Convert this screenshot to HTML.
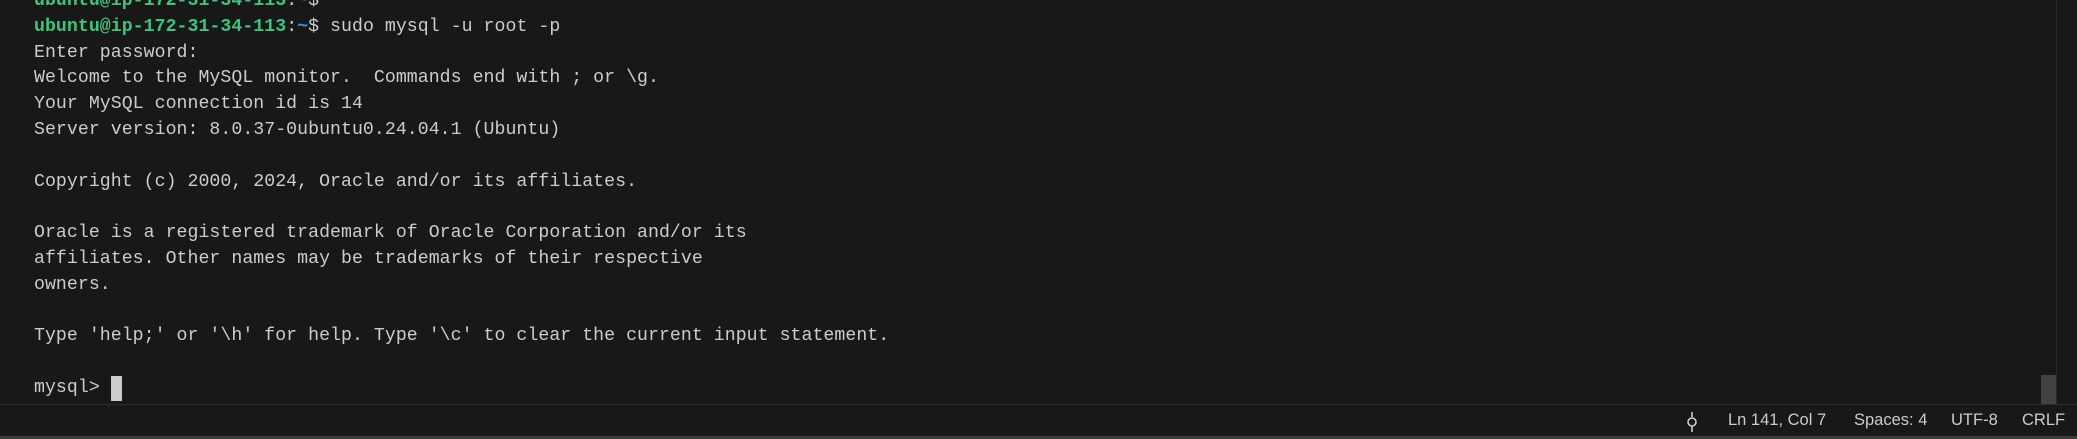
<!DOCTYPE html>
<html><head><style>
html,body{margin:0;padding:0;width:2077px;height:439px;overflow:hidden;background:#181818;}
.term{position:absolute;left:0;top:0;width:2077px;height:404px;background:#181818;}
.lines{position:absolute;left:34px;top:-11px;font-family:"Liberation Mono",monospace;font-size:18.2px;line-height:25.8px;color:#cccccc;white-space:pre;letter-spacing:0.05px;}
.g{color:#3fc47f;font-weight:bold}
.b{color:#3b8eea;font-weight:bold}
.cur{position:absolute;left:111px;top:376px;width:11px;height:25px;background:#cccccc;}
.sb{position:absolute;left:2041px;top:375px;width:15px;height:30px;background:#424242;}
.vl{position:absolute;left:2056px;top:0;width:1px;height:404px;background:#2b2b2b;}
.status{position:absolute;left:0;top:404px;width:2077px;height:32px;background:#181818;border-top:1px solid #2b2b2b;box-sizing:border-box;font-family:"Liberation Sans",sans-serif;font-size:16.5px;color:#cccccc;}
.status span{position:absolute;top:6px;}
.bot{position:absolute;left:0;top:436px;width:2077px;height:3px;background:#3c3c3c;}
</style></head><body>
<div class="term">
<div class="lines"><span class="g">ubuntu@ip-172-31-34-113</span>:<span class="b">~</span>$
<span class="g">ubuntu@ip-172-31-34-113</span>:<span class="b">~</span>$ sudo mysql -u root -p
Enter password:
Welcome to the MySQL monitor.  Commands end with ; or \g.
Your MySQL connection id is 14
Server version: 8.0.37-0ubuntu0.24.04.1 (Ubuntu)

Copyright (c) 2000, 2024, Oracle and/or its affiliates.

Oracle is a registered trademark of Oracle Corporation and/or its
affiliates. Other names may be trademarks of their respective
owners.

Type 'help;' or '\h' for help. Type '\c' to clear the current input statement.

mysql> </div>
<div class="cur"></div>
<div class="sb"></div>
<div class="vl"></div>
</div>
<div class="status">
<svg style="position:absolute;left:1685px;top:7px" width="14" height="20" viewBox="0 0 14 20"><line x1="7" y1="0" x2="7" y2="5" stroke="#ccc" stroke-width="1.6"/><circle cx="7" cy="10" r="4" fill="none" stroke="#ccc" stroke-width="1.6"/><line x1="7" y1="14" x2="7" y2="20" stroke="#ccc" stroke-width="1.6"/></svg>
<span style="left:1728px">Ln 141, Col 7</span>
<span style="left:1854px">Spaces: 4</span>
<span style="left:1951px">UTF-8</span>
<span style="left:2022px">CRLF</span>
</div>
<div class="bot"></div>
</body></html>
